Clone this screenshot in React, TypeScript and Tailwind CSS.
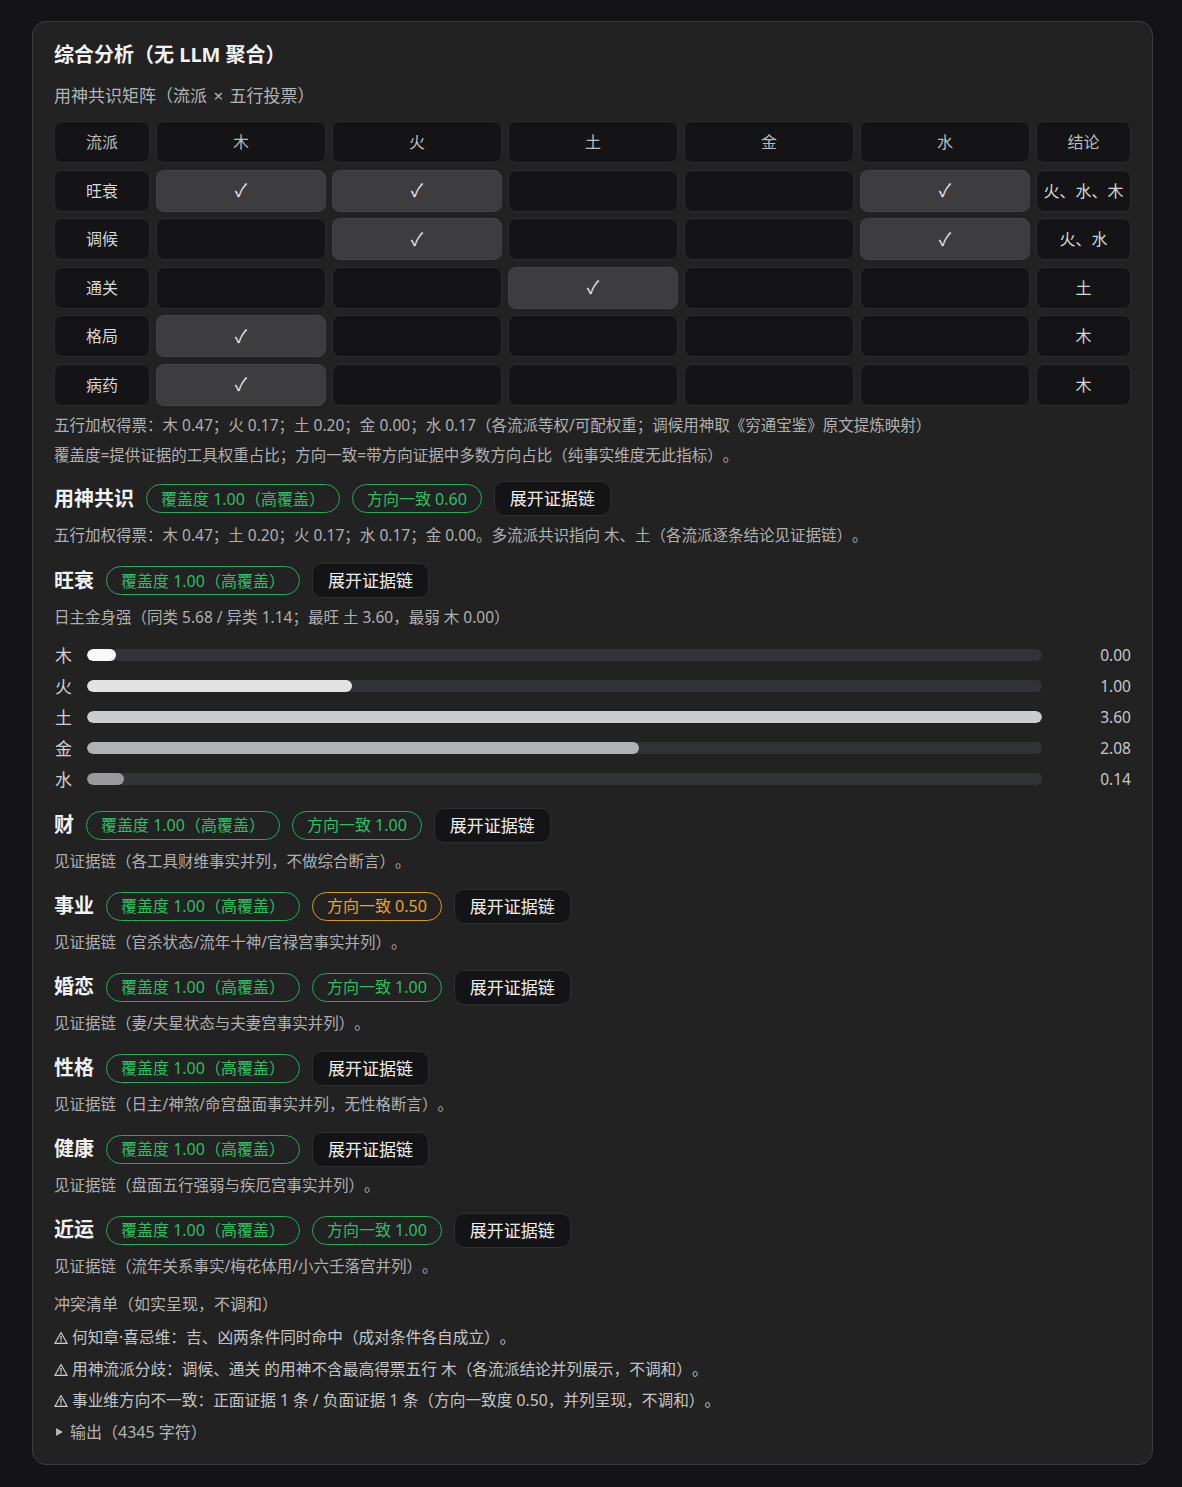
const elements = ["木", "火", "土", "金", "水"];

const matrix = [
  { school: "旺衰", picks: [true, true, false, false, true], result: "火、水、木" },
  { school: "调候", picks: [false, true, false, false, true], result: "火、水" },
  { school: "通关", picks: [false, false, true, false, false], result: "土" },
  { school: "格局", picks: [true, false, false, false, false], result: "木" },
  { school: "病药", picks: [true, false, false, false, false], result: "木" },
];

const strength = [
  { name: "木", value: 0, color: "bg-[#f8f9fa]" },
  { name: "火", value: 1.0, color: "bg-[#e1e2e1]" },
  { name: "土", value: 3.6, color: "bg-[#cbcccd]" },
  { name: "金", value: 2.08, color: "bg-[#b1b2b4]" },
  { name: "水", value: 0.14, color: "bg-[#9a9a9c]" },
];

type Tone = "green" | "orange";

const dims: { title: string; coverage: string; direction?: { text: string; tone: Tone }; desc: string }[] = [
  { title: "财", coverage: "覆盖度 1.00（高覆盖）", direction: { text: "方向一致 1.00", tone: "green" }, desc: "见证据链（各工具财维事实并列，不做综合断言）。" },
  { title: "事业", coverage: "覆盖度 1.00（高覆盖）", direction: { text: "方向一致 0.50", tone: "orange" }, desc: "见证据链（官杀状态/流年十神/官禄宫事实并列）。" },
  { title: "婚恋", coverage: "覆盖度 1.00（高覆盖）", direction: { text: "方向一致 1.00", tone: "green" }, desc: "见证据链（妻/夫星状态与夫妻宫事实并列）。" },
  { title: "性格", coverage: "覆盖度 1.00（高覆盖）", desc: "见证据链（日主/神煞/命宫盘面事实并列，无性格断言）。" },
  { title: "健康", coverage: "覆盖度 1.00（高覆盖）", desc: "见证据链（盘面五行强弱与疾厄宫事实并列）。" },
  { title: "近运", coverage: "覆盖度 1.00（高覆盖）", direction: { text: "方向一致 1.00", tone: "green" }, desc: "见证据链（流年关系事实/梅花体用/小六壬落宫并列）。" },
];

const conflicts = [
  "何知章·喜忌维：吉、凶两条件同时命中（成对条件各自成立）。",
  "用神流派分歧：调候、通关 的用神不含最高得票五行 木（各流派结论并列展示，不调和）。",
  "事业维方向不一致：正面证据 1 条 / 负面证据 1 条（方向一致度 0.50，并列呈现，不调和）。",
];

function Badge({ text, tone = "green" }: { text: string; tone?: Tone }) {
  return (
    <span
      className={
        tone === "green"
          ? "h-[29px] px-[14px] flex items-center rounded-full border border-[#25a95a] text-[#2cbf62] text-[16px]"
          : "h-[29px] px-[14px] flex items-center rounded-full border border-[#d99a1c] text-[#efa31d] text-[16px]"
      }
    >
      {text}
    </span>
  );
}

function ExpandButton() {
  return (
    <button className="h-[35px] px-[15px] rounded-[10px] bg-[#141416] border border-[#2f2f31] text-[17px] text-[#f0f0f0]">
      展开证据链
    </button>
  );
}

function Section({ title, children, desc }: { title: string; children: React.ReactNode; desc: string }) {
  return (
    <div className="flex flex-col">
      <div className="h-[36px] flex items-center gap-[12px]">
        <span className="text-[20px] font-bold text-[#f2f2f2]">{title}</span>
        {children}
      </div>
      <p className="mt-[6px] leading-[24px] text-[15.5px] text-[#b0b0b0]">{desc}</p>
    </div>
  );
}

function Warn() {
  return (
    <svg width="14" height="14" viewBox="0 0 16 16" className="mr-[4px] shrink-0">
      <path d="M8 1.8 L15 14.2 H1 Z" fill="none" stroke="#d0d0d0" strokeWidth="1.3" strokeLinejoin="round" />
      <path d="M8 6 V10" stroke="#d0d0d0" strokeWidth="1.4" strokeLinecap="round" />
      <circle cx="8" cy="12.1" r="0.85" fill="#d0d0d0" />
    </svg>
  );
}

export default function App() {
  const max = 3.6;
  return (
    <div className="min-h-[1487px] bg-[#141416] pt-[21px] pl-[32px] pr-[29px] pb-[23px] font-['Noto_Sans','Noto_Sans_CJK_SC',sans-serif] [text-spacing-trim:space-all]">
      <div className="rounded-[14px] border border-[#3c3c3e] bg-[#222222] px-[21px] pt-[19px] pb-[17px] flex flex-col">
        {/* 标题 */}
        <h1 className="text-[20px] leading-[28px] font-bold text-[#f2f2f2]">综合分析（无 LLM 聚合）</h1>
        <p className="mt-[15px] text-[17px] leading-[24px] text-[#b4b4b4]">用神共识矩阵（流派 <span className="px-[2px]">×</span> 五行投票）</p>

        {/* 矩阵 */}
        <div className="mt-[13px] grid grid-cols-[96px_1fr_1fr_1fr_1fr_1fr_95px] gap-x-[6px] gap-y-[6.6px]">
          <div className="h-[42px] flex items-center justify-center rounded-[8px] bg-[#141416] border border-[#2a2a2c] text-[16px] text-[#bcbcbc]">流派</div>
          {elements.map((e) => (
            <div key={e} className="h-[42px] flex items-center justify-center rounded-[8px] bg-[#141416] border border-[#2a2a2c] text-[16px] text-[#bcbcbc]">
              {e}
            </div>
          ))}
          <div className="h-[42px] flex items-center justify-center rounded-[8px] bg-[#141416] border border-[#2a2a2c] text-[16px] text-[#bcbcbc]">结论</div>
          {matrix.map((row) => (
            <>
              <div key={row.school} className="h-[42px] flex items-center justify-center rounded-[8px] bg-[#141416] border border-[#2a2a2c] text-[16px] text-[#d6d6d6]">
                {row.school}
              </div>
              {row.picks.map((p, i) =>
                p ? (
                  <div key={row.school + i} className="h-[42px] flex items-center justify-center rounded-[8px] bg-[#3d3d40] border border-[#454547] text-[18px] text-[#e8e8e8]">
                    ✓
                  </div>
                ) : (
                  <div key={row.school + i} className="h-[42px] rounded-[8px] bg-[#141416] border border-[#2a2a2c]" />
                )
              )}
              <div className="h-[42px] flex items-center justify-center rounded-[8px] bg-[#141416] border border-[#2a2a2c] text-[16px] text-[#d6d6d6] whitespace-nowrap">
                {row.result}
              </div>
            </>
          ))}
        </div>

        <p className="mt-[4px] text-[15.5px] leading-[30px] text-[#b0b0b0]">
          五行加权得票：木 0.47；火 0.17；土 0.20；金 0.00；水 0.17（各流派等权/可配权重；调候用神取《穷通宝鉴》原文提炼映射）
        </p>
        <p className="text-[15.5px] leading-[30px] text-[#b0b0b0]">
          覆盖度=提供证据的工具权重占比；方向一致=带方向证据中多数方向占比（纯事实维度无此指标）。
        </p>

        {/* 用神共识 */}
        <div className="mt-[11px]">
          <Section title="用神共识" desc="五行加权得票：木 0.47；土 0.20；火 0.17；水 0.17；金 0.00。多流派共识指向 木、土（各流派逐条结论见证据链）。">
            <Badge text="覆盖度 1.00（高覆盖）" />
            <Badge text="方向一致 0.60" />
            <ExpandButton />
          </Section>
        </div>

        {/* 旺衰 */}
        <div className="mt-[16px]">
          <Section title="旺衰" desc="日主金身强（同类 5.68 / 异类 1.14；最旺 土 3.60，最弱 木 0.00）">
            <Badge text="覆盖度 1.00（高覆盖）" />
            <ExpandButton />
          </Section>
        </div>

        <div className="mt-[11px] flex flex-col">
          {strength.map((s) => (
            <div key={s.name} className="h-[31px] flex items-center">
              <span className="w-[33px] pl-[1px] text-[17px] text-[#d0d0d0]">{s.name}</span>
              <div className="w-[955px] h-[12px] rounded-full bg-[#323336] overflow-hidden">
                <div className={`h-full rounded-full ${s.color}`} style={{ width: `${Math.max(3, (s.value / max) * 100)}%` }} />
              </div>
              <span className="flex-1 text-right text-[15.5px] text-[#c8c8c8]">{s.value.toFixed(2)}</span>
            </div>
          ))}
        </div>

        {/* 各维度 */}
        <div className="mt-[12.5px] flex flex-col gap-[15px]">
          {dims.map((d) => (
            <Section key={d.title} title={d.title} desc={d.desc}>
              <Badge text={d.coverage} />
              {d.direction && <Badge text={d.direction.text} tone={d.direction.tone} />}
              <ExpandButton />
            </Section>
          ))}
        </div>

        {/* 冲突清单 */}
        <p className="mt-[14px] text-[16px] leading-[24px] text-[#b4b4b4]">冲突清单（如实呈现，不调和）</p>
        <div className="mt-[6px] flex flex-col">
          {conflicts.map((c) => (
            <div key={c} className="h-[31.5px] flex items-center text-[15.7px] text-[#c4c4c4]">
              <Warn />
              {c}
            </div>
          ))}
        </div>
        <div className="h-[30px] flex items-center text-[16px] text-[#b4b4b4]">
          <svg width="9" height="10" viewBox="0 0 9 10" className="mr-[6px] ml-[1px]">
            <path d="M1 1 L8 5 L1 9 Z" fill="#b4b4b4" />
          </svg>
          输出（4345 字符）
        </div>
      </div>
    </div>
  );
}
